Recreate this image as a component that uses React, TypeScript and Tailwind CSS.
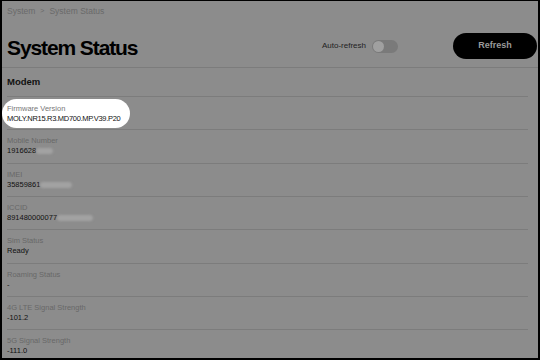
const ROWS = [
  { label: 'Mobile Number', value: '1916628', blur: 17 },
  { label: 'IMEI', value: '35859861', blur: 32 },
  { label: 'ICCID', value: '891480000077', blur: 36 },
  { label: 'Sim Status', value: 'Ready' },
  { label: 'Roaming Status', value: '-' },
  { label: '4G LTE Signal Strength', value: '-101.2' },
  { label: '5G Signal Strength', value: '-111.0' },
]

function Row({ label, value, blur }: { label: string; value: string; blur?: number }) {
  return (
    <div className="h-[33.33px] border-b border-[#7c7c7c] pt-[6px] mr-[10px]">
      <p className="text-[7.5px] leading-[10px] text-[#686868]">{label}</p>
      <p className="text-[7.5px] leading-[10px] text-[#111] flex items-center">
        {value}
        {blur && (
          <span
            className="inline-block h-[6px] bg-[#a2a2a2] blur-[1px] rounded-sm"
            style={{ width: blur }}
          />
        )}
      </p>
    </div>
  )
}

export default function App() {
  return (
    <div
      className="w-[540px] h-[360px] overflow-hidden bg-[#8c8c8c] border-black border-t border-l-2 border-r-2 border-b-2"
      style={{ fontFamily: '"Liberation Sans", Arial, sans-serif' }}
    >
      {/* header */}
      <div className="border-b border-[#7c7c7c] h-[67px] pl-[5px] pr-[1px]">
        <div className="flex items-center gap-[5px] pt-[5px] text-[8.5px] leading-[10px] text-[#6a6a6a]">
          <span>System</span>
          <span className="text-[7px]">&gt;</span>
          <span>System Status</span>
        </div>
        <div className="flex items-center justify-between mt-[15px]">
          <h1 className="text-[21px] leading-[26px] font-bold text-black tracking-[-1.1px] mt-[4px]">System Status</h1>
          <div className="flex items-center">
            <span className="text-[8px] text-[#222]">Auto-refresh</span>
            <div className="ml-[6px] w-[26px] h-[13px] rounded-full bg-[#7a7a7a] flex items-center px-[1px]">
              <div className="w-[11px] h-[11px] rounded-full bg-[#a0a0a0]" />
            </div>
            <button className="ml-[55px] w-[84px] h-[26px] rounded-full bg-black text-[#9a9a9a] text-[9px] font-bold">
              Refresh
            </button>
          </div>
        </div>
      </div>

      <div className="pl-[5px]">
        <div className="h-[29px] border-b border-[#7c7c7c] mr-[10px] flex items-center">
          <span className="text-[9.5px] font-bold text-[#111]">Modem</span>
        </div>

        {/* highlighted firmware row */}
        <div className="h-[33.33px] border-b border-[#7c7c7c] mr-[10px] flex items-center">
          <div className="-ml-[5px] w-[128px] h-[29px] bg-white rounded-full pl-[5px] pt-[5px]">
            <p className="text-[7.5px] leading-[10px] text-[#777]">Firmware Version</p>
            <p className="text-[7.5px] leading-[10px] text-[#111] tracking-[-0.3px]">MOLY.NR15.R3.MD700.MP.V39.P20</p>
          </div>
        </div>

        {ROWS.map(r => (
          <Row key={r.label} {...r} />
        ))}
      </div>
    </div>
  )
}
